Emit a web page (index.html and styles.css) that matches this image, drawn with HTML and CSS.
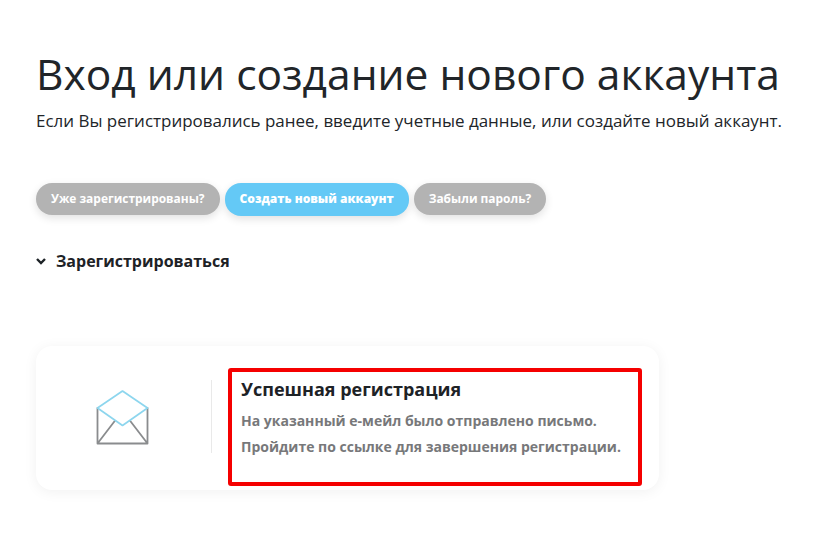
FILE: index.html
```html
<!DOCTYPE html>
<html lang="ru">
<head>
<meta charset="utf-8">
<title>Вход или создание нового аккаунта</title>
<link rel="stylesheet" href="styles.css">
</head>
<body>
<main class="page">
  <h1 class="title">Вход или создание нового аккаунта</h1>
  <p class="lead">Если Вы регистрировались ранее, введите учетные данные, или создайте новый аккаунт.</p>
  <div class="tabs">
    <span class="tab">Уже зарегистрированы?</span>
    <span class="tab tab-active">Создать новый аккаунт</span>
    <span class="tab">Забыли пароль?</span>
  </div>
  <div class="toggle">
    <svg class="chevron" width="10" height="7" viewBox="0 0 10 7"><path d="M1 1 5 5 9 1" fill="none" stroke="#1d2226" stroke-width="2.4"/></svg>
    <span>Зарегистрироваться</span>
  </div>
  <section class="card">
    <div class="card-icon">
      <svg width="54" height="56" viewBox="0 0 54 56">
        <path d="M1.5 18V53.5H51.5V18M1.5 53.5 19.5 30M51.5 53.5 33.5 30" fill="none" stroke="#8a8c8e" stroke-width="1.8" stroke-linejoin="round" stroke-linecap="round"/>
        <path d="M26.5 1 51.5 18 26.5 35.5 1.5 18Z" fill="#fff" stroke="#8dd6ee" stroke-width="1.7" stroke-linejoin="round"/>
      </svg>
    </div>
    <div class="card-rule"></div>
    <div class="notice">
      <h2 class="notice-title">Успешная регистрация</h2>
      <p class="notice-text">На указанный е-мейл было отправлено письмо.</p>
      <p class="notice-text">Пройдите по ссылке для завершения регистрации.</p>
    </div>
  </section>
</main>
</body>
</html>
```
FILE: styles.css
```css
* { box-sizing: border-box; }
html, body { margin: 0; padding: 0; background: #fff; }
body { font-family: "Open Sans", "Noto Sans", sans-serif; color: #212529; overflow: hidden; }
.page { padding: 45px 0 0 36px; width: 817px; height: 543px; }
.title { margin: 0; font-size: 42.5px; line-height: 58px; font-weight: 400; white-space: nowrap; }
.lead { margin: 6px 0 0; font-size: 16.98px; line-height: 24px; white-space: nowrap; }
.tabs { display: flex; gap: 5px; margin-top: 50px; }
.tab { height: 32px; padding: 0 15px; border-radius: 16px; background: #b3b3b3; color: #fff; font-size: 11.95px; font-weight: 700; line-height: 32px; white-space: nowrap; box-shadow: 0 3px 8px rgba(0,0,0,.12); }
.tab-active { background: #64c9f6; height: 33px; font-size: 12px; font-weight: 800; }
.toggle { display: flex; align-items: center; gap: 10px; margin-top: 33px; font-size: 16px; font-weight: 700; line-height: 24px; color: #1d2226; }
.card { display: flex; align-items: flex-start; width: 623px; height: 144px; margin-top: 73px; border-radius: 16px; background: #fff; box-shadow: 0 2px 14px rgba(0,0,0,.06); }
.card-icon { width: 175px; padding: 44px 0 0 60px; }
.card-rule { width: 1px; height: 73px; margin-top: 34px; background: #e9e9e9; }
.notice { width: 414px; height: 118px; margin: 22px 0 0 16px; padding: 4px 0 0 9px; border: 4px solid #f50000; border-radius: 3px; }
.notice-title { margin: 0; font-size: 18px; line-height: 26px; font-weight: 700; color: #1d2226; }
.notice-text { margin: 0; font-size: 14px; line-height: 26px; font-weight: 700; color: #77787a; white-space: nowrap; }
.notice-title + .notice-text { margin-top: 6px; }
```
